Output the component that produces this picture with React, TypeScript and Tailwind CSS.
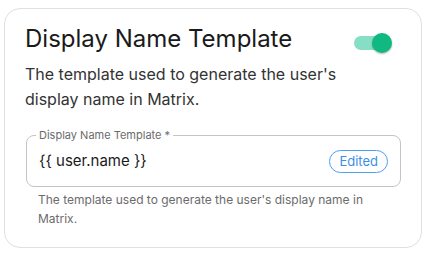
import React from "react";

export default function App() {
  return (
    <div className="w-[432px] h-[254px] bg-white pt-[8px] pl-[4px]" style={{ fontFamily: "Inter, 'Noto Sans', sans-serif" }}>
      <div className="w-[418px] h-[240px] rounded-[16px] border border-[#e0e0e0] bg-white px-[20px] pt-[14px]">
        <div className="flex items-center justify-between">
          <h2 className="text-[24px] leading-[32px] text-[#1a1a1a] font-normal">Display Name Template</h2>
          <div className="relative w-[32px] h-[14px] mr-[15px] mt-[8px]">
            <div className="absolute inset-0 rounded-full bg-[#86dfc4]" />
            <div className="absolute right-[-6px] top-[-3px] w-[20px] h-[20px] rounded-full bg-[#10b981] shadow-[0_1px_2px_rgba(0,0,0,0.3)]" />
          </div>
        </div>
        <p className="mt-[7px] text-[16px] leading-[25px] text-[#333333] pr-[40px]">
          The template used to generate the user's display name in Matrix.
        </p>
        <div className="relative mt-[23px] ml-[1px] w-[375px] h-[52px] rounded-[8px] border border-[#c4c4c4] flex items-center justify-between pl-[12px] pr-[12px]">
          <span className="absolute left-[9px] top-[-8px] bg-white px-[3px] text-[11px] leading-[14px] text-[#6b6b6b]">Display Name Template *</span>
          <span className="text-[15px] text-[#1a1a1a]">{"{{ user.name }}"}</span>
          <span className="h-[23px] px-[9px] rounded-full border border-[#4a9ff5] text-[13px] leading-[21px] text-[#3b8fe8]">Edited</span>
        </div>
        <p className="mt-[3px] pl-[13px] text-[12px] leading-[19px] text-[#6b6b6b] pr-[20px]">
          The template used to generate the user's display name in Matrix.
        </p>
      </div>
    </div>
  );
}
